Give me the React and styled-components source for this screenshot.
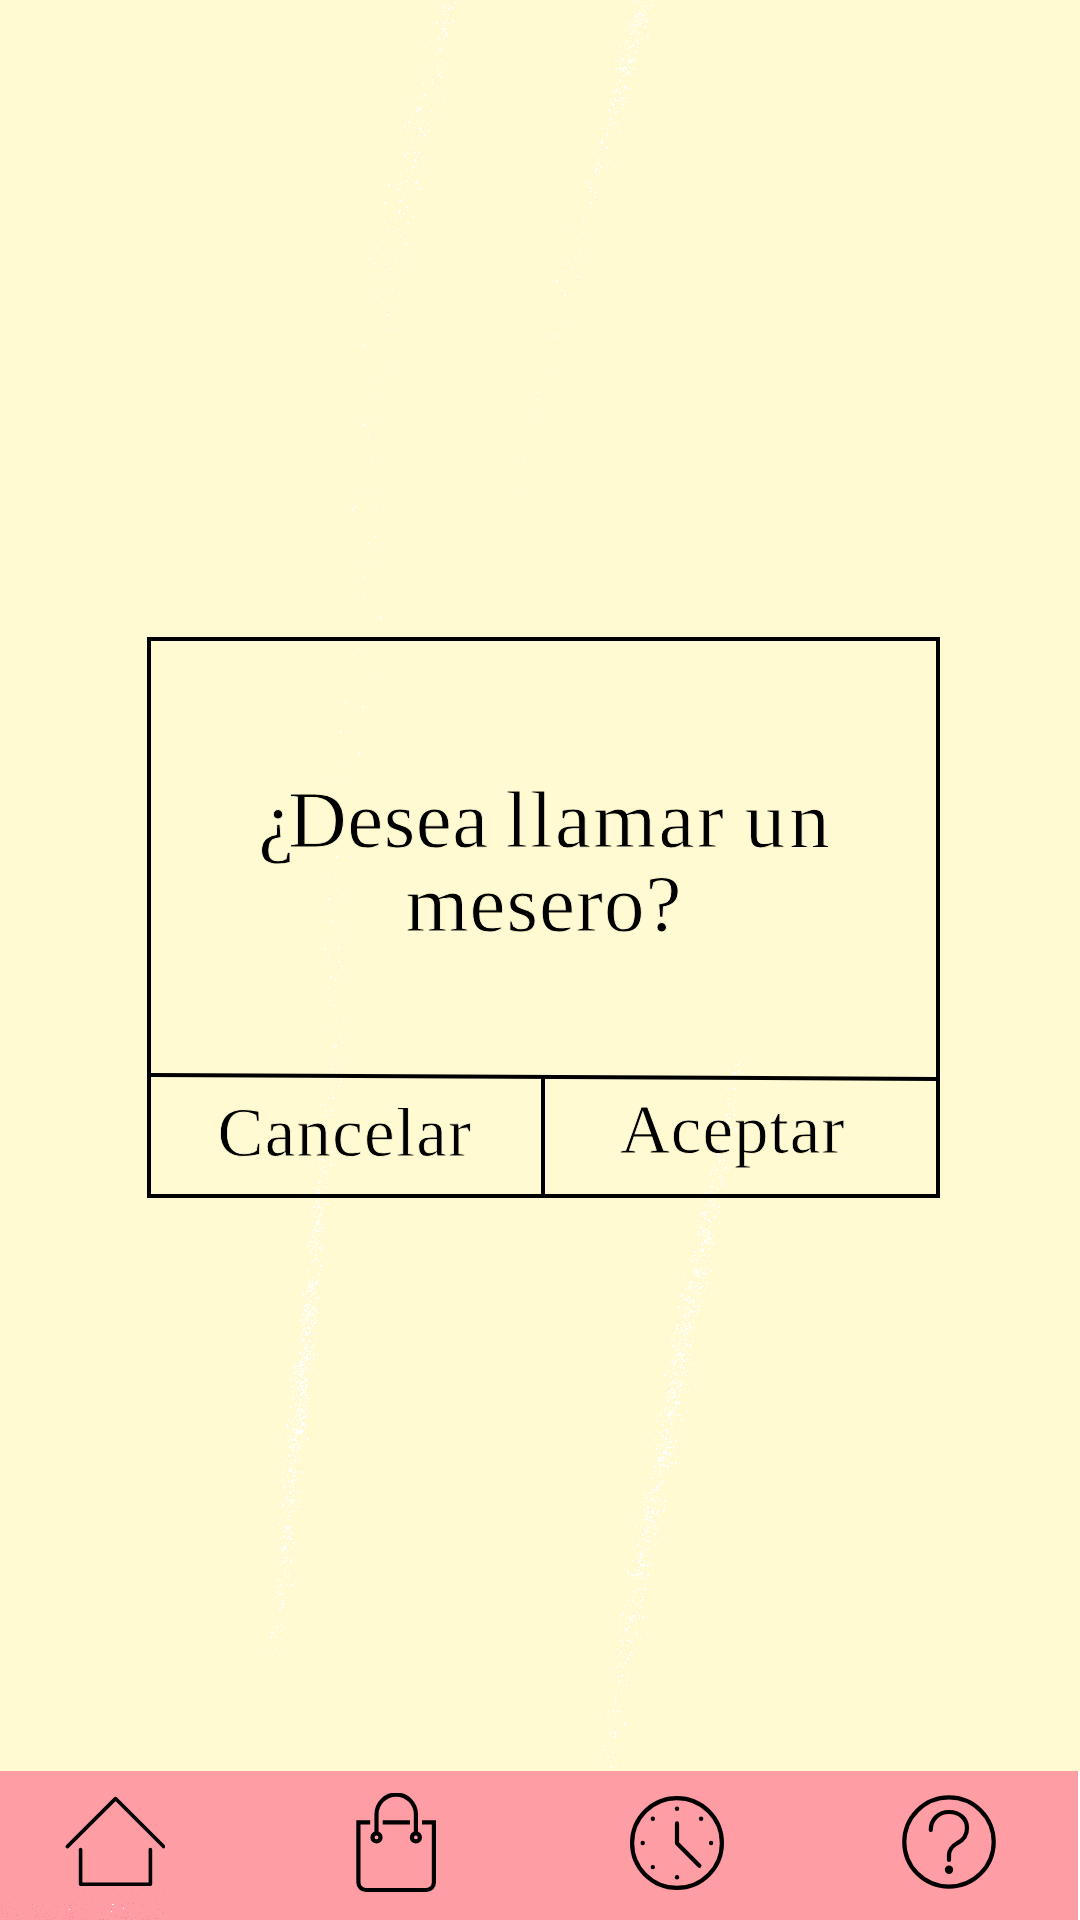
import React from 'react';
import styled, { createGlobalStyle } from 'styled-components';

const GlobalStyle = createGlobalStyle`
  * { box-sizing: border-box; }
  body { margin: 0; background: #fffad1; }
`;

const Screen = styled.div`
  position: relative;
  display: flex;
  flex-direction: column;
  width: 1080px;
  height: 1920px;
  overflow: hidden;
  background: #fffad1;
  color: #000;
  font-family: 'Liberation Serif', 'Times New Roman', serif;
`;

const Texture = styled.svg`
  position: absolute;
  inset: 0;
  pointer-events: none;
`;

const Main = styled.main`
  flex: 1;
  padding: 637px 0 0 146.5px;
`;

const Dialog = styled.section`
  position: relative;
  display: flex;
  flex-direction: column;
  width: 793px;
  height: 561px;
  border: 4px solid #000;
`;

const Message = styled.div`
  height: 434px;
  padding-top: 137px;
  display: flex;
  flex-direction: column;
  align-items: center;
`;

/* A hairline stroke in the page colour lightens the weight of the letters. */
const MessageLine = styled.div`
  font-size: 81px;
  line-height: 84px;
  white-space: nowrap;
  letter-spacing: 1px;
  word-spacing: -4px;
  -webkit-text-stroke: 0.9px #fffad1;
  transform: translateX(${(p) => p.$shift}px);
`;

const Tracked = styled.span`
  letter-spacing: ${(p) => p.$spacing}px;
`;

const Rule = styled.div`
  height: 4px;
  margin: 0 -1px;
  background: #000;
  transform: rotate(0.285deg);
`;

const Actions = styled.div`
  flex: 1;
  display: grid;
  grid-template-columns: 390.5px 1fr;
`;

const Action = styled.button`
  appearance: none;
  border: 0;
  border-left: ${(p) => (p.$divided ? '4px solid #000' : '0')};
  margin: ${(p) => (p.$divided ? '-2px 0 0' : '0')};
  padding: ${(p) => p.$top}px 0 0 ${(p) => p.$left}px;
  background: none;
  color: inherit;
  font-family: inherit;
  font-size: 69px;
  line-height: 76px;
  letter-spacing: ${(p) => p.$spacing}px;
  -webkit-text-stroke: 0.8px #fffad1;
  text-align: left;
  display: flex;
  align-items: flex-start;
`;

const NavBar = styled.nav`
  display: grid;
  grid-template-columns: 281px 281px 272px 100px;
  height: 149px;
  padding: 22px 0 0 65px;
  background: #ff9da4;
  border-right: 2px solid #fff;
`;

const NavItem = styled.a`
  width: 100px;
  height: 100px;
`;

const Icon = styled.svg`
  display: block;
  width: 100px;
  height: 100px;
  fill: none;
  stroke: #000;
  stroke-width: ${(p) => p.$weight || 4.2};
  stroke-linecap: round;
  stroke-linejoin: round;
`;

const HomeIcon = () => (
  <Icon viewBox="65 1793 100 100" $weight={3.6}>
    <path d="M67.3 1846.6 115.5 1798.6 163.6 1846.6" />
    <path d="M80.6 1849.5V1884.2H150.4V1849.5" />
  </Icon>
);

const BagIcon = () => (
  <Icon viewBox="346 1793 100 100">
    <path
      strokeLinecap="butt"
      strokeLinejoin="miter"
      d="M370.2 1822.4H358.4V1882.5A7.5 7.5 0 0 0 365.9 1890H426.4A7.5 7.5 0 0 0 433.9 1882.5V1822.4H422M382.7 1822.4H410"
    />
    <path d="M376.5 1833V1814.3A19.7 19.7 0 0 1 415.9 1814.3V1833" />
    <circle cx="376.5" cy="1837.4" r="4" />
    <circle cx="415.9" cy="1837.4" r="4" />
  </Icon>
);

const hourDots = [
  [677, 1808.7], [652.8, 1818.8], [701.1, 1818.8], [642.7, 1843],
  [711.1, 1843], [652.8, 1867.1], [677, 1877.2],
];

const ClockIcon = () => (
  <Icon viewBox="627 1793 100 100">
    <circle cx="677" cy="1843" r="44.9" />
    <path d="M677 1823.4V1843.2L699.4 1865.8" />
    {hourDots.map(([x, y]) => (
      <circle key={`${x}-${y}`} cx={x} cy={y} r="2.2" fill="#000" stroke="none" />
    ))}
  </Icon>
);

const HelpIcon = () => (
  <Icon viewBox="899 1793 100 100">
    <circle cx="949" cy="1842" r="44.7" />
    <path d="M930.8 1830C930.8 1819 939 1812 949 1812C960 1812 967 1819 967 1828C967 1835 963.5 1840 957.5 1843C951.5 1846.3 949 1850 949 1855V1860" />
    <circle cx="949" cy="1869.8" r="4.2" fill="#000" stroke="none" />
  </Icon>
);

/* Grain trails: x, y, half-width and relative density at each stop. */
const trails = [
  [[449, 0, 11, 0.75], [438, 55, 12, 0.75], [420, 125, 15, 0.8], [405, 190, 18, 0.4], [388, 270, 22, 0.25], [373, 340, 22, 0.12], [370, 500, 24, 0.07], [355, 640, 25, 0.1], [330, 850, 25, 0.08], [335, 1050, 9, 0.25], [326, 1130, 9, 0.55], [320, 1190, 9, 0.7], [312, 1280, 9, 1.3], [304, 1350, 10, 2.7], [300, 1400, 12, 2.5], [294, 1450, 11, 1.6], [288, 1510, 9, 1], [284, 1565, 8, 1.1], [279, 1610, 8, 0.3], [274, 1655, 7, 0.15]],
  [[643, 0, 10, 1.4], [635, 30, 11, 1.9], [624, 70, 11, 1.3], [615, 110, 12, 0.7], [604, 148, 11, 0.6], [585, 210, 8, 0.12], [570, 265, 10, 0.3], [555, 340, 8, 0.05], [512, 525, 6, 0.02]],
  [[738, 1060, 8, 0.15], [731, 1100, 10, 0.55], [719, 1165, 10, 0.5], [708, 1210, 11, 1.5], [697, 1270, 12, 1.7], [684, 1335, 12, 2], [673, 1400, 13, 1.8], [660, 1468, 12, 1.8], [647, 1530, 13, 1.3], [637, 1590, 12, 1.5], [626, 1635, 12, 0.9], [617, 1690, 9, 0.6], [610, 1770, 9, 0.3]],
];

function seeded(seed) {
  let s = seed;
  return () => {
    s = (s * 16807) % 2147483647;
    return s / 2147483647;
  };
}

function buildGrain() {
  const rnd = seeded(4127);
  let d = '';
  trails.forEach((stops) => {
    for (let i = 1; i < stops.length; i += 1) {
      const [x0, y0, w0, n0] = stops[i - 1];
      const [x1, y1, w1, n1] = stops[i];
      const count = Math.round((y1 - y0) * (n0 + n1) * 0.62);
      for (let k = 0; k < count; k += 1) {
        const t = rnd();
        const spread = (rnd() + rnd() + rnd() - 1.5) * (w0 + (w1 - w0) * t) * 0.9;
        const x = Math.round(x0 + (x1 - x0) * t + spread);
        const y = Math.round(y0 + (y1 - y0) * t);
        const w = rnd() > 0.6 ? 2 : 1;
        const h = rnd() > 0.6 ? 2 : 1;
        d += `M${x} ${y}h${w}v${h}h-${w}z`;
      }
    }
  });
  return d;
}

function buildBarGrain() {
  const rnd = seeded(911);
  let d = '';
  for (let k = 0; k < 150; k += 1) {
    const x = Math.round(rnd() * 165);
    const y = Math.round(1920 - rnd() * rnd() * 34);
    d += `M${x} ${y}h1v1h-1z`;
  }
  return d;
}

const grain = buildGrain();
const barGrain = buildBarGrain();

export default function App() {
  return (
    <Screen>
      <GlobalStyle />
      <Texture width="1080" height="1771" viewBox="0 0 1080 1771" aria-hidden="true">
        <path d={grain} fill="#fff" />
      </Texture>
      <Main>
        <Dialog>
          <Message>
            <MessageLine $shift={3}>
              <Tracked $spacing={-6}>¿</Tracked>
              <Tracked $spacing={0.5}>Desea </Tracked>
              <Tracked $spacing={2.3}>llamar </Tracked>
              <Tracked $spacing={4}>un</Tracked>
            </MessageLine>
            <MessageLine $shift={1}>mesero?</MessageLine>
          </Message>
          <Rule />
          <Actions>
            <Action $top={16} $left={67} $spacing={1.2}>Cancelar</Action>
            <Action $divided $top={15} $left={75} $spacing={1}>Aceptar</Action>
          </Actions>
        </Dialog>
      </Main>
      <NavBar>
        <NavItem><HomeIcon /></NavItem>
        <NavItem><BagIcon /></NavItem>
        <NavItem><ClockIcon /></NavItem>
        <NavItem><HelpIcon /></NavItem>
      </NavBar>
      <Texture width="1078" height="1920" viewBox="0 0 1078 1920" aria-hidden="true">
        <path d={barGrain} fill="#ff8790" />
        <path d="M69 1909h1v1h-1zM112 1904h2v1h-2zM111 1911h1v1h-1zM123 1908h1v1h-1z" fill="#fff" />
      </Texture>
    </Screen>
  );
}
